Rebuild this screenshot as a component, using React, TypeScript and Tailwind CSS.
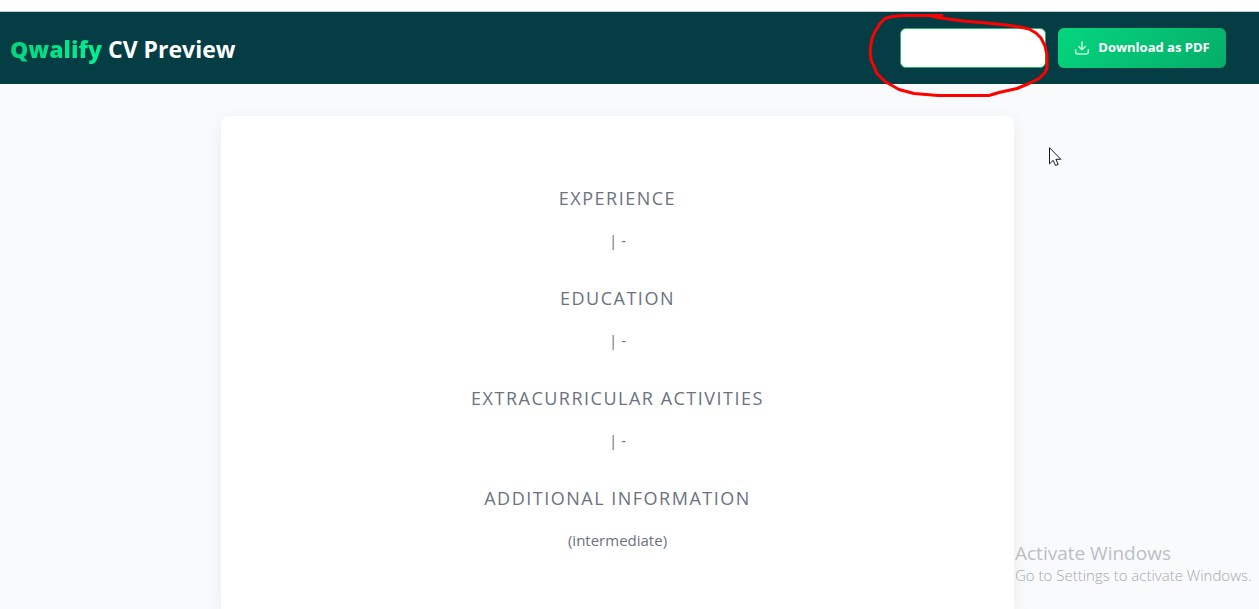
const sections = [
  { title: "Experience", detail: "| -" },
  { title: "Education", detail: "| -" },
  { title: "Extracurricular Activities", detail: "| -" },
  { title: "Additional Information", detail: "(intermediate)" },
];

function DownloadIcon() {
  return (
    <svg
      className="size-4 text-[#c6f5e0]"
      viewBox="0 0 16 16"
      fill="none"
      stroke="currentColor"
      strokeWidth="1.5"
      strokeLinecap="round"
      strokeLinejoin="round"
      aria-hidden="true"
    >
      <path d="M8 2v7.7M4.7 6.5 8 9.8l3.3-3.3M1.7 9.8v2.5c0 1 .7 1.7 1.7 1.7h9.2c1 0 1.7-.7 1.7-1.7V9.8" />
    </svg>
  );
}

function Header() {
  return (
    <header className="flex h-[72px] items-center justify-between bg-[#043d44] pr-[33px] pl-[10px]">
      <h1 className="pt-0.5 font-['Open_Sans','Noto_Sans',sans-serif] text-[23px] leading-8 font-bold whitespace-nowrap text-white">
        <span className="bg-linear-135 from-[#05cf7c] to-[#00f593] bg-clip-text font-extrabold text-transparent">
          Qwalify
        </span>{" "}
        CV Preview
      </h1>
      <div className="flex items-center gap-3">
        <div className="relative">
          <button
            type="button"
            aria-label="Action"
            className="block h-10 w-[146px] rounded-md border border-[#2fae6c] bg-white"
          />
          <svg
            className="pointer-events-none absolute -top-[14px] -left-[31px] h-[84px] w-[180px]"
            viewBox="869 14 180 84"
            fill="none"
            stroke="#ff0000"
            strokeWidth="3"
            strokeLinecap="round"
            strokeLinejoin="round"
            aria-hidden="true"
          >
            <path d="M942 15.5H904l-12 1-7 2-5 5-5 8-3 7-2 12 1 9 6 14 8 8 14 8 15 4 24 2h51l10-3 18-4 12-5 10-5 6-6 2-4V55l-2-9-4-8-5-5-7-4-9-2-14-2-19-2-24-2-22-3-10-2-3-1 13-1" />
          </svg>
        </div>
        <button
          type="button"
          className="flex h-10 w-[168px] items-center justify-center gap-2 rounded-md bg-linear-135 from-[#05d67e] to-[#05ad69] text-[13px] font-bold whitespace-nowrap text-white"
        >
          <DownloadIcon />
          Download as PDF
        </button>
      </div>
    </header>
  );
}

function Cursor() {
  return (
    <svg
      className="pointer-events-none absolute top-[147px] left-[1049px] h-5 w-[13px]"
      viewBox="0 0 13 20"
      fill="#fff"
      stroke="#111827"
      strokeWidth="1"
      aria-hidden="true"
    >
      <path d="M.5.7v16.2l3.7-3.6 2.3 5.2 2.7-1.1-2.3-5.1h4.9Z" />
    </svg>
  );
}

export default function App() {
  return (
    <div className="relative flex h-screen flex-col overflow-hidden bg-[#f9fafc] font-['Open_Sans','Noto_Sans',sans-serif]">
      <div className="h-3 shrink-0 border-b border-[#c3cdcf] bg-white" />
      <Header />
      <main className="flex flex-1 justify-center pt-8 pr-6">
        <article className="w-full max-w-[793px] rounded-t-lg bg-white px-12 pt-[68px] text-center text-[#6b7280] shadow-[0_4px_20px_rgba(15,23,42,0.06)]">
          {sections.map(({ title, detail }) => (
            <section key={title} className="h-[100px]">
              <h2 className="text-[18px] leading-7 tracking-[1.5px] uppercase">{title}</h2>
              <p className="mt-4 text-[15px] leading-6">{detail}</p>
            </section>
          ))}
        </article>
      </main>
      <Cursor />
      <aside className="absolute right-2 bottom-6 w-[236px]">
        <p className="text-[19px] leading-6 text-[#bcbfc2]">Activate Windows</p>
        <p className="text-[15px] leading-5 font-light whitespace-nowrap text-[#a6a9ac]">
          Go to Settings to activate Windows.
        </p>
      </aside>
    </div>
  );
}
